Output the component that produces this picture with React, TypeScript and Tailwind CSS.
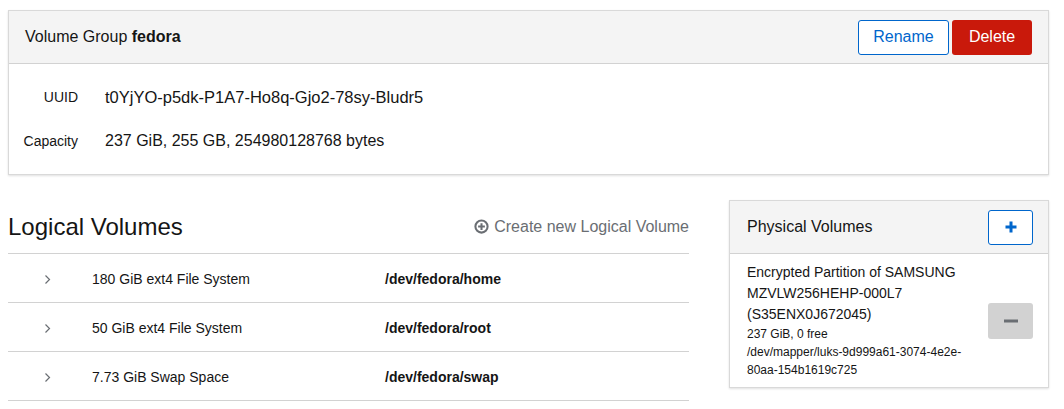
const rows = [
  { desc: '180 GiB ext4 File System', path: '/dev/fedora/home' },
  { desc: '50 GiB ext4 File System', path: '/dev/fedora/root' },
  { desc: '7.73 GiB Swap Space', path: '/dev/fedora/swap' },
]

export default function App() {
  return (
    <div
      className="min-h-[409px] bg-white pl-2 pr-[15px] pt-[10px] text-[#151515]"
      style={{ fontFamily: '"Liberation Sans", Arial, sans-serif' }}
    >
      {/* volume group card */}
      <div className="border border-[#d9d9d9] shadow-[0_1px_2px_rgba(0,0,0,0.12)]">
        <div className="flex h-[53px] items-center justify-between border-b border-[#d2d2d2] bg-[#f4f4f4] pl-4 pr-4">
          <div className="text-base">
            Volume Group <span className="font-bold">fedora</span>
          </div>
          <div className="flex gap-[3px]">
            <button className="h-[35px] w-[91px] rounded-[3px] border border-[#0066cc] bg-white text-base text-[#0066cc]">
              Rename
            </button>
            <button className="h-[35px] w-[80px] rounded-[3px] bg-[#c9190b] text-base text-white">
              Delete
            </button>
          </div>
        </div>
        <div className="grid grid-cols-[69px_1fr] items-center gap-x-[27px] gap-y-[22px] pt-[22px] pb-[22px]">
          <div className="text-right text-sm">UUID</div>
          <div className="text-[16.5px] leading-[22px]">t0YjYO-p5dk-P1A7-Ho8q-Gjo2-78sy-Bludr5</div>
          <div className="text-right text-sm">Capacity</div>
          <div className="text-base leading-[22px]">237 GiB, 255 GB, 254980128768 bytes</div>
        </div>
      </div>

      <div className="mt-[24px] flex gap-[40px]">
        {/* logical volumes */}
        <div className="w-[681px]">
          <div className="flex h-[54px] items-center justify-between pt-[1px]">
            <h2 className="text-[24px]">Logical Volumes</h2>
            <div className="flex items-center gap-[5px] text-base text-[#6a6e73]">
              <svg width="15" height="15" viewBox="0 0 16 16">
                <circle cx="8" cy="8" r="6.5" fill="none" stroke="#6a6e73" strokeWidth="2.2" />
                <path d="M8 4.4v7.2M4.4 8h7.2" stroke="#6a6e73" strokeWidth="2.2" />
              </svg>
              <span>Create new Logical Volume</span>
            </div>
          </div>
          <div className="border-t border-[#d2d2d2]">
            {rows.map((r) => (
              <div key={r.path} className="flex h-[49px] items-center border-b border-[#d2d2d2] pt-[2px] text-sm">
                <div className="flex w-[84px] pl-[36px]">
                  <svg width="7" height="11" viewBox="0 0 7 11">
                    <path d="M1.5 1.5l4 4-4 4" fill="none" stroke="#6a6e73" strokeWidth="1.2" />
                  </svg>
                </div>
                <div className="w-[293px]">{r.desc}</div>
                <div className="font-bold">{r.path}</div>
              </div>
            ))}
          </div>
        </div>

        {/* physical volumes */}
        <div className="mt-[1px] w-[320px] self-start border border-[#d9d9d9] shadow-[0_1px_2px_rgba(0,0,0,0.12)]">
          <div className="flex h-[53px] items-center justify-between border-b border-[#d2d2d2] bg-[#f4f4f4] pl-[17px] pr-[15px]">
            <div className="text-base">Physical Volumes</div>
            <button className="flex h-[35px] w-[45px] items-center justify-center rounded-[3px] border border-[#0066cc] bg-white">
              <svg width="14" height="14" viewBox="0 0 14 14">
                <path d="M7 1.5v11M1.5 7h11" stroke="#0066cc" strokeWidth="3" />
              </svg>
            </button>
          </div>
          <div className="flex items-center gap-3 py-[8px] pl-[17px] pr-[15px]">
            <div className="flex-1">
              <div className="text-sm leading-[21px]">
                Encrypted Partition of SAMSUNG MZVLW256HEHP-000L7 (S35ENX0J672045)
              </div>
              <div className="text-xs leading-[18px]">237 GiB, 0 free</div>
              <div className="text-xs leading-[18px]">/dev/mapper/luks-9d999a61-3074-4e2e-80aa-154b1619c725</div>
            </div>
            <button className="flex h-[36px] w-[45px] shrink-0 items-center justify-center rounded-[3px] bg-[#d2d2d2]">
              <svg width="14" height="4" viewBox="0 0 14 4">
                <path d="M0 2h14" stroke="#6a6e73" strokeWidth="3" />
              </svg>
            </button>
          </div>
        </div>
      </div>
    </div>
  )
}
